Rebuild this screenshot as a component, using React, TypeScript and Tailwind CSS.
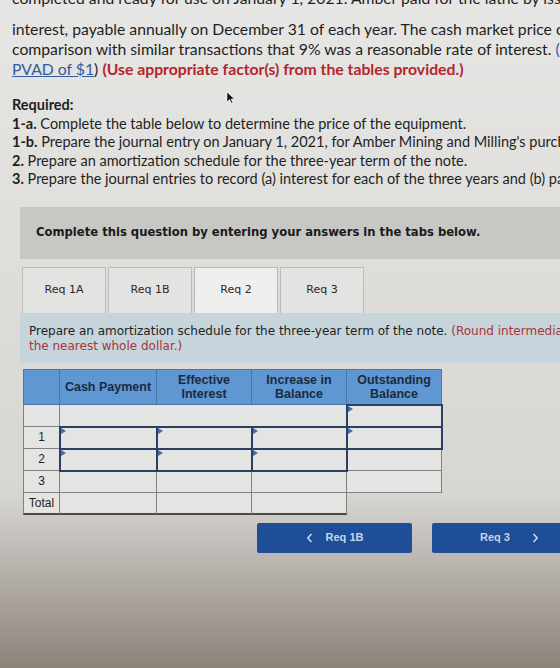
import React from 'react';

type CellKind = 'plain' | 'input' | 'none';

interface ScheduleRow {
  label: string;
  cells: CellKind[];
  merged?: boolean;
}

const tabs = ['Req 1A', 'Req 1B', 'Req 2', 'Req 3'];
const activeTab = 'Req 2';

const rows: ScheduleRow[] = [
  { label: '', cells: ['plain', 'input'], merged: true },
  { label: '1', cells: ['input', 'input', 'input', 'input'] },
  { label: '2', cells: ['input', 'input', 'input', 'plain'] },
  { label: '3', cells: ['plain', 'plain', 'plain', 'plain'] },
  { label: 'Total', cells: ['plain', 'plain', 'plain', 'none'] },
];

const headers = ['Cash Payment', 'Effective Interest', 'Increase in Balance', 'Outstanding Balance'];

const Flag = () => (
  <span className="absolute left-[1px] top-[1px] h-0 w-0 border-y-[3px] border-l-[5px] border-y-transparent border-l-[#3a6db5]" />
);

const ScheduleCell: React.FC<{ kind: CellKind; span?: boolean; last?: boolean }> = ({ kind, span, last }) => {
  if (kind === 'none') return <div className="h-[22px]" />;
  const base = `relative h-[22px] border-r border-b bg-[#e4e4e2] ${last ? 'border-b-2 border-b-[#4a4a4a]' : 'border-b-[#808080]'} border-r-[#808080]`;
  if (kind === 'input') {
    return (
      <div className={`${base} z-10 outline-2 -outline-offset-1 outline-[#2c3f60]`}>
        <Flag />
      </div>
    );
  }
  return <div className={`${base} ${span ? 'col-span-3' : ''}`} />;
};

const Cursor = () => (
  <svg className="absolute left-[226px] top-[91px]" width="9" height="13" viewBox="0 0 9 13">
    <path d="M1 1 L1 11 L3.6 8.6 L5.4 12.2 L6.8 11.5 L5.1 8 L8.4 8 Z" fill="#111" stroke="#fff" strokeWidth="0.6" />
  </svg>
);

export default function App() {
  return (
    <div className="relative h-[668px] w-[560px] overflow-hidden bg-linear-to-b from-[#e6e6e4] from-0% via-[#d8d6d2] via-[74%] to-[#8c847b] text-[#1f1f1f]">
      <Cursor />

      {/* problem text */}
      <div className="-mt-[12px] pl-3 font-['Lato','Liberation_Sans',sans-serif] whitespace-nowrap">
        <div className="text-[15.75px] leading-[20px]">
          <div className="mb-[11px]">completed and ready for use on January 1, 2021. Amber paid for the lathe by issuing a</div>
          <div>interest, payable annually on December 31 of each year. The cash market price of the</div>
          <div>
            comparison with similar transactions that 9% was a reasonable rate of interest.{' '}
            <span className="text-[#2f5d9e]">(FV of $1, PV of $1</span>
          </div>
          <div>
            <span className="text-[#2f5d9e] underline">PVAD of $1</span>){' '}
            <span className="font-bold text-[#b3262b]">(Use appropriate factor(s) from the tables provided.)</span>
          </div>
        </div>

        <div className="mt-[17px] text-[14.5px] leading-[18.5px]">
          <div className="font-bold">Required:</div>
          <div>
            <b>1-a.</b> Complete the table below to determine the price of the equipment.
          </div>
          <div>
            <b>1-b.</b> Prepare the journal entry on January 1, 2021, for Amber Mining and Milling's purchase of the lathe.
          </div>
          <div>
            <b>2.</b> Prepare an amortization schedule for the three-year term of the note.
          </div>
          <div>
            <b>3.</b> Prepare the journal entries to record (a) interest for each of the three years and (b) payment of the note.
          </div>
        </div>
      </div>

      {/* tabbed question */}
      <div className="ml-5 mt-[18px] font-['DejaVu_Sans',sans-serif]">
        <div className="flex h-[52px] items-center bg-[#c7c7c4] pl-4 text-[11.6px] font-bold whitespace-nowrap text-[#1a1a1a]">
          Complete this question by entering your answers in the tabs below.
        </div>

        <div className="mt-2 flex gap-[2px] pl-[2px]">
          {tabs.map((t) => (
            <div
              key={t}
              className={`flex h-[46px] w-[84px] items-center justify-center border border-b-0 text-[11px] text-[#2a2a2a] ${
                t === activeTab ? 'border-[#b9b9b7] bg-[#efefed]' : 'border-[#bcbcba] bg-[#e3e3e1]'
              }`}
            >
              {t}
            </div>
          ))}
        </div>

        <div className="h-[50px] bg-[#c6d5db] pl-[9px] pt-[11px] text-[12px] leading-[15.5px] whitespace-nowrap text-[#222]">
          <div>
            Prepare an amortization schedule for the three-year term of the note.{' '}
            <span className="text-[#a8343a]">(Round intermediate calculations and final answers to</span>
          </div>
          <div className="text-[#a8343a]">the nearest whole dollar.)</div>
        </div>

        {/* amortization schedule */}
        <div className="ml-[3px] mt-[6px] grid w-[419px] grid-cols-[37px_97px_95px_95px_95px] font-['Liberation_Sans',sans-serif]">
          <div className="h-[36px] border border-[#4a76a8] bg-[#5f97d2]" />
          {headers.map((h) => (
            <div
              key={h}
              className="flex h-[36px] items-center justify-center border-y border-r border-[#4a76a8] bg-[#5f97d2] px-1 text-center text-[12.5px] leading-[14px] font-bold text-[#1b2a42]"
            >
              {h}
            </div>
          ))}

          {rows.map((row, ri) => {
            const last = ri === rows.length - 1;
            return (
              <React.Fragment key={ri}>
                <div
                  className={`flex h-[22px] items-center justify-center border-x border-b border-[#808080] bg-[#e4e4e2] text-[12px] text-[#222] ${
                    last ? 'border-b-2 border-b-[#4a4a4a]' : ''
                  }`}
                >
                  {row.label}
                </div>
                {row.cells.map((c, ci) => (
                  <ScheduleCell key={ci} kind={c} span={row.merged && ci === 0} last={last} />
                ))}
              </React.Fragment>
            );
          })}
        </div>

        <div className="mt-2 flex gap-5 pl-[237px] font-['Liberation_Sans',sans-serif] text-[11px] font-bold text-[#c9d4e6]">
          <button className="flex h-[30px] w-[155px] shrink-0 items-center justify-center gap-[13px] rounded-[2px] bg-[#1e4e98]">
            <svg width="7" height="10" viewBox="0 0 7 10">
              <path d="M5.5 1 L1.8 5 L5.5 9" fill="none" stroke="#c9d4e6" strokeWidth="1.6" />
            </svg>
            <span>Req 1B</span>
          </button>
          <button className="flex h-[30px] w-[155px] shrink-0 items-center justify-center gap-[22px] rounded-[2px] bg-[#1e4e98]">
            <span>Req 3</span>
            <svg width="7" height="10" viewBox="0 0 7 10">
              <path d="M1.5 1 L5.2 5 L1.5 9" fill="none" stroke="#c9d4e6" strokeWidth="1.6" />
            </svg>
          </button>
        </div>
      </div>
    </div>
  );
}
